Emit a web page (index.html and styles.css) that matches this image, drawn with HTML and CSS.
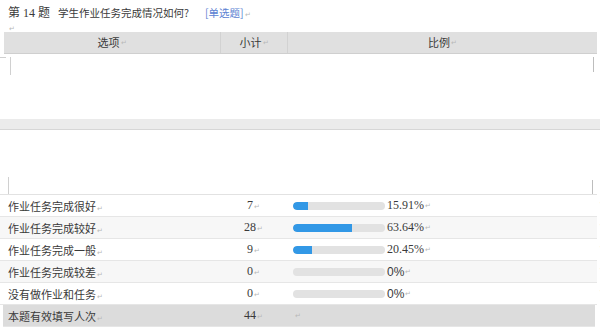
FILE: index.html
```html
<!DOCTYPE html>
<html lang="zh">
<head>
<meta charset="utf-8">
<link rel="stylesheet" href="styles.css">
</head>
<body>
<div class="page">
  <div class="title"><span class="serif">第 14 题</span><span class="q">学生作业任务完成情况如何?</span><span class="type">[单选题]</span><span class="pm">↵</span></div>
  <div class="blank"><span class="pm">↵</span></div>
  <div class="thead">
    <div class="th">选项<span class="pm">↵</span></div>
    <div class="th sep">小计<span class="pm">↵</span></div>
    <div class="th sep">比例<span class="pm">↵</span></div>
  </div>
  <div class="gap gap1"><span class="tick tl"></span><span class="tick tr"></span></div>
  <div class="band"></div>
  <div class="gap gap2"><span class="tick bl"></span><span class="tick br"></span></div>
  <div class="rows">
    <div class="row">
      <div class="opt">作业任务完成很好<span class="pm">↵</span></div>
      <div class="cnt">7<span class="pm">↵</span></div>
      <div class="ratio"><div class="bar"><div class="fill" style="width:15.91%"></div></div><span class="pct">15.91%</span><span class="pm">↵</span></div>
    </div>
    <div class="row alt">
      <div class="opt">作业任务完成较好<span class="pm">↵</span></div>
      <div class="cnt">28<span class="pm">↵</span></div>
      <div class="ratio"><div class="bar"><div class="fill" style="width:63.64%"></div></div><span class="pct">63.64%</span><span class="pm">↵</span></div>
    </div>
    <div class="row">
      <div class="opt">作业任务完成一般<span class="pm">↵</span></div>
      <div class="cnt">9<span class="pm">↵</span></div>
      <div class="ratio"><div class="bar"><div class="fill" style="width:20.45%"></div></div><span class="pct">20.45%</span><span class="pm">↵</span></div>
    </div>
    <div class="row alt">
      <div class="opt">作业任务完成较差<span class="pm">↵</span></div>
      <div class="cnt">0<span class="pm">↵</span></div>
      <div class="ratio"><div class="bar"></div><span class="pct sans">0%</span><span class="pm">↵</span></div>
    </div>
    <div class="row">
      <div class="opt">没有做作业和任务<span class="pm">↵</span></div>
      <div class="cnt">0<span class="pm">↵</span></div>
      <div class="ratio"><div class="bar"></div><span class="pct sans">0%</span><span class="pm">↵</span></div>
    </div>
    <div class="row total">
      <div class="opt">本题有效填写人次<span class="pm">↵</span></div>
      <div class="cnt">44<span class="pm">↵</span></div>
      <div class="ratio"><span class="pm lone">↵</span></div>
    </div>
  </div>
</div>
</body>
</html>
```
FILE: styles.css
```css
* { box-sizing: border-box; }
html, body { margin: 0; padding: 0; background: #fff; }
body {
  width: 600px;
  height: 333px;
  overflow: hidden;
  font-family: "Noto Sans CJK SC", "Liberation Sans", sans-serif;
  font-size: 11px;
  color: #3a3a3a;
}
.page { position: relative; width: 600px; }
.serif { font-family: "Liberation Serif", "Noto Sans CJK SC", serif; font-size: 12px; }
.pm {
  font-family: "Liberation Sans", sans-serif;
  font-size: 7px;
  color: #b8b8b8;
  margin-left: 1px;
  vertical-align: baseline;
}
.title {
  height: 22px;
  padding: 2px 0 0 8px;
  line-height: 20px;
  white-space: nowrap;
}
.q { margin-left: 8px; font-size: 10.5px; }
.type { color: #5b82d2; margin-left: 16px; font-size: 10.5px; }
.blank {
  height: 10px;
  padding-left: 8px;
  line-height: 8px;
}
.thead {
  display: grid;
  grid-template-columns: 216px 67px 310px;
  margin-left: 4px;
  width: 593px;
  height: 22px;
  background: #e0e0e0;
  border-bottom: 1px solid #cfcfcf;
}
.th {
  display: flex;
  align-items: center;
  justify-content: center;
  line-height: 21px;
}
.th.sep { border-left: 1px solid #d2d2d2; }
.gap { position: relative; }
.gap1 { height: 65px; }
.gap2 { height: 64px; }
.tick { position: absolute; background: #d0d0d0; width: 1px; }
.tl { left: 10px; top: 3px; height: 18px; }
.tl::before { content: ""; position: absolute; left: -10px; top: 0; width: 6px; height: 1px; background: #d0d0d0; }
.tr { left: 593px; top: 3px; height: 15px; background: #bdbdbd; }
.bl { left: 8px; top: 47px; height: 17px; }
.br { left: 592px; top: 50px; height: 14px; background: #bdbdbd; }
.band {
  height: 11px;
  background: #ebebeb;
  border-bottom: 1px solid #d6d6d6;
}
.rows { border-top: 1px solid #e2e2e2; width: 597px; }
.row {
  display: grid;
  grid-template-columns: 220px 67px 310px;
  height: 22px;
  border-bottom: 1px solid #e6e6e6;
  align-items: center;
  position: relative;
}
.row::after {
  content: "•";
  position: absolute;
  left: 597px;
  top: 2px;
  font-size: 8px;
  color: #999;
}
.row.alt { background: #f7f7f7; }
.row.total { background: #dcdcdc; margin-left: 3px; width: 592px; grid-template-columns: 217px 67px 308px; }
.opt { padding-left: 8px; white-space: nowrap; }
.total .opt { padding-left: 5px; }
.cnt {
  text-align: center;
  font-family: "Liberation Serif", serif;
  font-size: 12px;
}
.ratio {
  display: flex;
  align-items: center;
  padding-left: 6px;
}
.bar {
  width: 92px;
  height: 8px;
  border-radius: 4px;
  background: #e2e2e2;
  overflow: hidden;
}
.fill { height: 100%; background: #3298e6; border-radius: 4px 0 0 4px; }
.pct {
  margin-left: 2px;
  font-family: "Liberation Serif", serif;
  font-size: 12px;
}
.pct.sans { font-family: "Liberation Sans", sans-serif; }
.lone { margin-left: 2px; }
```
